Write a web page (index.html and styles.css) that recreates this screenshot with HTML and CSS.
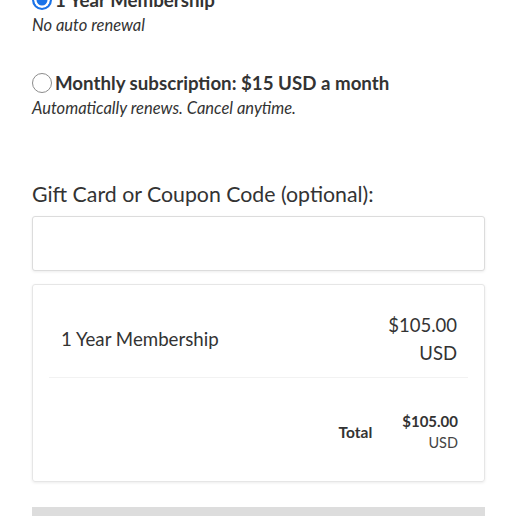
FILE: index.html
```html
<!DOCTYPE html>
<html lang="en">
<head>
<meta charset="utf-8">
<title>Checkout</title>
<link rel="stylesheet" href="styles.css">
</head>
<body>
<main class="page">
  <section class="plans">
    <div class="plan">
      <label class="plan-label"><input type="radio" name="plan" class="radio" checked> 1 Year Membership</label>
      <p class="plan-note">No auto renewal</p>
    </div>
    <div class="plan plan-second">
      <label class="plan-label"><input type="radio" name="plan" class="radio"> Monthly subscription: $15 USD a month</label>
      <p class="plan-note">Automatically renews. Cancel anytime.</p>
    </div>
  </section>

  <section class="coupon">
    <label class="coupon-label" for="code">Gift Card or Coupon Code (optional):</label>
    <input id="code" class="coupon-input" type="text">
  </section>

  <section class="summary">
    <div class="summary-row item-row">
      <span class="item-name">1 Year Membership</span>
      <span class="item-price">$105.00<br>USD</span>
    </div>
    <div class="summary-row total-row">
      <span class="total-label">Total</span>
      <span class="total-price"><strong>$105.00</strong><span class="total-cur">USD</span></span>
    </div>
  </section>

  <div class="submit-bar"></div>
</main>
</body>
</html>
```

FILE: styles.css
```css
html, body {
  margin: 0;
  padding: 0;
  background: #ffffff;
}

body {
  font-family: Lato, "Open Sans", sans-serif;
  color: #333333;
}

.page {
  width: 453px;
  margin-left: 32px;
  margin-top: -11px;
}

.plans {
  display: flex;
  flex-direction: column;
}

.plan-second {
  margin-top: 36px;
}

.plan-label {
  display: flex;
  align-items: center;
  gap: 3px;
  font-size: 18.7px;
  font-weight: 700;
  line-height: 22px;
  color: #333;
}

.radio {
  appearance: none;
  -webkit-appearance: none;
  box-sizing: border-box;
  width: 20px;
  height: 20px;
  margin: 0;
  border: 1.5px solid #8c8c8c;
  border-radius: 50%;
  background: #fff;
}

.radio:checked {
  border: 2px solid #1a73e8;
  background: #1a73e8;
  box-shadow: inset 0 0 0 2.5px #fff;
}

.plan-note {
  margin: 4px 0 0;
  font-size: 16.5px;
  font-style: italic;
  line-height: 21px;
  color: #333;
}

.coupon {
  margin-top: 61px;
  display: flex;
  flex-direction: column;
}

.coupon-label {
  font-size: 21.3px;
  line-height: 28px;
  color: #333;
}

.coupon-input {
  margin-top: 8px;
  height: 55px;
  box-sizing: border-box;
  border: 1px solid #dcdcdc;
  border-radius: 3px;
  box-shadow: 0 1px 3px rgba(0,0,0,0.08);
  background: #fff;
}

.summary {
  margin-top: 13px;
  border: 1px solid #e6e6e6;
  border-radius: 3px;
  box-shadow: 0 1px 3px rgba(0,0,0,0.08);
  padding: 16px 16px 18px;
}

.summary-row {
  display: flex;
  justify-content: space-between;
  align-items: center;
  padding: 10px 11px 10px 12px;
}

.item-row {
  height: 56px;
  border-bottom: 1px solid #f2f2f2;
}

.item-name {
  font-size: 18.7px;
  line-height: 24px;
}

.item-price {
  font-size: 18.5px;
  line-height: 28px;
  text-align: right;
}

.total-row {
  justify-content: flex-end;
  gap: 30px;
  padding-top: 32px;
  padding-bottom: 9px;
  padding-right: 10px;
}

.total-label {
  font-size: 15.5px;
  font-weight: 700;
}

.total-price {
  display: flex;
  flex-direction: column;
  align-items: flex-end;
  font-size: 15px;
  line-height: 22px;
}

.total-cur {
  font-size: 14.5px;
  color: #444;
}

.submit-bar {
  margin-top: 25px;
  height: 40px;
  background: #dddddd;
}
```
